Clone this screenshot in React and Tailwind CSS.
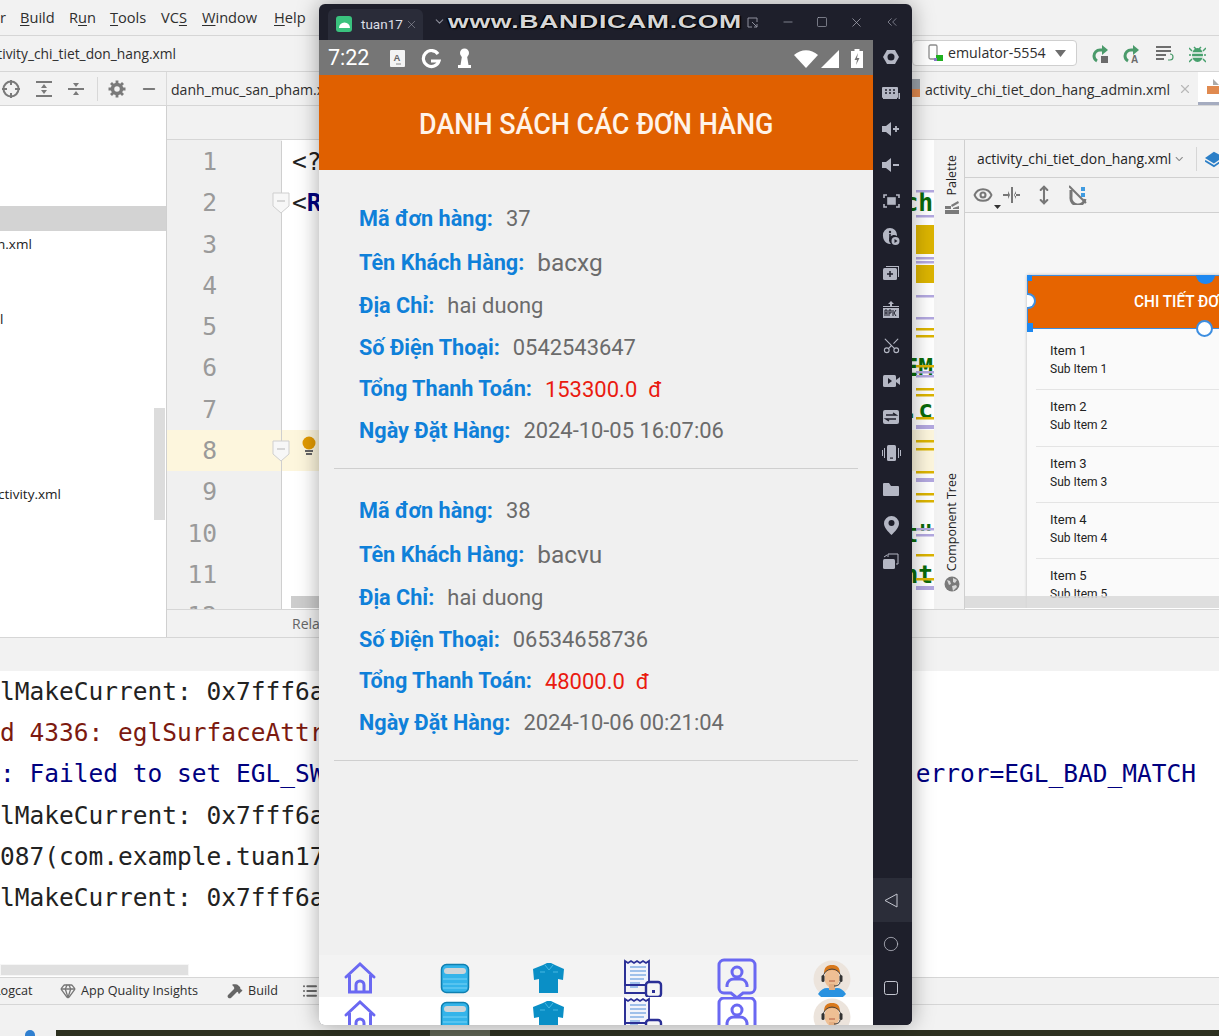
import React from "react";
import { X, Minus, Square, ChevronsLeft, ChevronDown, Scissors, Eye, MoveVertical, Hammer, Gem, List, Circle } from "lucide-react";

const IDE = "font-['Open_Sans','Noto_Sans',sans-serif]";
const MONO = "font-['DejaVu_Sans_Mono',monospace]";

function Underlined({ k, rest }) {
  return <span><span className="underline underline-offset-2 decoration-1">{k}</span>{rest}</span>;
}

function MenuBar() {
  return (
    <div className="h-[36px] shrink-0 border-b border-[#d6d6d6] flex items-center text-[14.6px] text-[#2e2e2e] whitespace-nowrap">
      <span className="w-[20px]">r</span>
      <span className="w-[49px]"><Underlined k="B" rest="uild" /></span>
      <span className="w-[41px]">R<span className="underline underline-offset-2 decoration-1">u</span>n</span>
      <span className="w-[51px]"><Underlined k="T" rest="ools" /></span>
      <span className="w-[41px]">VC<span className="underline underline-offset-2 decoration-1">S</span></span>
      <span className="w-[72px]"><Underlined k="W" rest="indow" /></span>
      <span><Underlined k="H" rest="elp" /></span>
    </div>
  );
}

function RunIcon({ letter }) {
  return (
    <svg width="18" height="20" viewBox="0 0 18 20" fill="none">
      <path d="M13 6H9a6 6 0 0 0-6 6 6 6 0 0 0 3 5" stroke="#4a9a6a" strokeWidth="3" />
      <path d="M11 1l6 5-6 5z" fill="#4a9a6a" />
      {letter ? <text x="9" y="19" fontSize="10" fontWeight="700" fill="#6b6b6b" fontFamily="Liberation Sans">A</text> : <rect x="10" y="12" width="7" height="7" fill="#6b6b6b" />}
    </svg>
  );
}

function BreadcrumbRow() {
  return (
    <div className="h-[36px] shrink-0 border-b border-[#d6d6d6] flex items-center text-[13.8px] text-[#2e2e2e] whitespace-nowrap">
      <span className="-ml-[17px] pt-[2px]">activity_chi_tiet_don_hang.xml</span>
      <div className="ml-auto flex items-center">
        <div className="w-[165px] h-[26px] mt-[-1px] bg-white border border-[#cfcfcf] rounded-[4px] flex items-center pl-[14px] pr-[10px]">
          <svg width="18" height="18" viewBox="0 0 18 18" className="mr-[3px]">
            <rect x="2" y="1" width="8" height="14" rx="1.5" fill="none" stroke="#8d8d8d" strokeWidth="1.3" />
            <rect x="9" y="11" width="7" height="6" fill="#20b020" />
            <rect x="7" y="14" width="3" height="3" fill="#8a7ac8" />
          </svg>
          <span className="text-[14.2px]">emulator-5554</span>
          <svg width="11" height="7" viewBox="0 0 11 7" className="ml-auto"><path d="M0 0h11L5.500 7z" fill="#6e6e6e" /></svg>
        </div>
        <div className="w-[142px] flex items-center pl-[14px] gap-[13px]">
          <RunIcon />
          <RunIcon letter />
          <svg width="19" height="17" viewBox="0 0 19 17" className="ml-[3px]">
            <path d="M0 2h15M0 6h15M0 10h10M0 14h8" stroke="#6e6e6e" strokeWidth="2.200" />
            <path d="M14 9c4 0 4 6 0 6h-2" stroke="#4a9a6a" fill="none" strokeWidth="1.200" />
          </svg>
          <svg width="17" height="18" viewBox="0 0 17 18" className="ml-[1px]">
            <ellipse cx="8.500" cy="10" rx="5.500" ry="7" fill="#47a06d" />
            <path d="M3 6L0 3M14 6l3-3M2 10H0M17 10h-2M3 14l-3 3M14 14l3 3M5 2l2 2M12 2l-2 2" stroke="#47a06d" strokeWidth="1.500" />
            <path d="M3 8h11M3 12h11" stroke="#f2f2f2" strokeWidth="1.300" />
          </svg>
        </div>
      </div>
    </div>
  );
}

function TabIcon() {
  return (
    <svg width="14" height="20" viewBox="0 0 14 20">
      <path d="M4 0h10v10H4z" fill="#9aa0a8" />
      <rect x="0" y="10" width="14" height="8" fill="#e08a50" />
    </svg>
  );
}

function TabsRow() {
  return (
    <div className="h-[34px] shrink-0 border-b border-[#d6d6d6] flex items-stretch text-[14.1px] text-[#2e2e2e] whitespace-nowrap">
      <div className="w-[167px] shrink-0 border-r border-[#dadada] flex items-center text-[#777]">
        <svg width="20" height="20" viewBox="0 0 20 20" fill="none" stroke="#7a7a7a" strokeWidth="2" className="ml-px">
          <circle cx="10" cy="10" r="7.500" />
          <path d="M10 1v5M10 14v5M1 10h5M14 10h5" />
        </svg>
        <svg width="18" height="18" viewBox="0 0 18 18" fill="#7a7a7a" className="ml-[14px]">
          <path d="M1 1h16v2H1zM1 15h16v2H1zM9 4l3 4H6zM9 14l-3-4h6z" />
        </svg>
        <svg width="18" height="18" viewBox="0 0 18 18" fill="#7a7a7a" className="ml-[14px]">
          <path d="M1 8h16v2H1zM9 7L6 3h6zM9 11l3 4H6z" />
        </svg>
        <div className="w-px h-[24px] bg-[#d8d8d8] ml-[12px]" />
        <svg width="18" height="18" viewBox="0 0 18 18" fill="none" stroke="#7a7a7a" className="ml-[10px]">
          <circle cx="9" cy="9" r="4.500" strokeWidth="3.500" />
          <path d="M9 0.500v3.500M9 14v3.500M0.500 9h3.500M14 9h3.500M3 3l2.500 2.500M12.500 12.500L15 15M15 3l-2.500 2.500M5.500 12.500L3 15" strokeWidth="2.800" />
        </svg>
        <Minus size={18} stroke="#7a7a7a" strokeWidth={2.500} className="ml-[14px]" />
      </div>
      <div className="pl-[4px] pt-[2px] flex items-center">danh_muc_san_pham.xml</div>
      <div className="ml-auto flex items-stretch">
        <div className="flex items-center">
          <TabIcon />
          <span className="ml-[-1px] pl-[6px] pt-[2px]">activity_chi_tiet_don_hang_admin.xml</span>
          <X size={14} stroke="#b8b8b8" className="ml-[8px] mr-[6px]" />
        </div>
        <div className="w-[21px] bg-white border-b-[3px] border-[#a5acc0] flex items-center justify-end overflow-hidden">
          <svg width="12" height="20" viewBox="0 0 12 20"><path d="M6 2l6 6H6z" fill="#aaa" /><rect y="9" width="12" height="8" fill="#e08a50" /></svg>
        </div>
      </div>
    </div>
  );
}

function LeftPanel() {
  return (
    <div className="w-[167px] shrink-0 bg-white border-r border-[#d0d0d0] relative text-[13.5px] text-[#222] whitespace-nowrap overflow-hidden">
      <div className="mt-[100px] h-[25px] bg-[#d3d3d3] w-full" />
      <div className="h-[25px] mt-px flex items-center justify-start"><span className="-ml-[3px]">n.xml</span></div>
      <div className="h-[25px] mt-[50px] flex items-center"><span>l</span></div>
      <div className="h-[25px] mt-[150px] flex items-center"><span className="-ml-[2px]">ctivity.xml</span></div>
      <div className="absolute right-0 top-[301px] w-[13px] h-[114px] bg-[#dcdcdc] border border-white" />
    </div>
  );
}

function Fold() {
  return (
    <svg width="18" height="22" viewBox="0 0 18 22" className="absolute left-[-10px] top-[10px] z-10">
      <path d="M1 1h16v13l-8 7-8-7z" fill="#f7f7f7" stroke="#cfcfcf" />
      <path d="M5 9h8" stroke="#b5b5b5" />
    </svg>
  );
}

const FRAGS = { 2: "ch", 6: "EM", 7: ".c", 10: 't"', 11: "nt" };

function Editor() {
  const lines = Array.from({ length: 12 }, (_, i) => i + 1);
  return (
    <div className="w-[767px] shrink-0 h-full overflow-hidden relative bg-white">
      <div className="h-px bg-[#f0f0f0] w-[115px]" />
      {lines.map((n) => (
        <div key={n} className={`flex h-[41.3px] ${n === 8 ? "bg-[#fdf6dd]" : ""}`}>
          <div className={`w-[115px] shrink-0 border-r border-[#cfcfcf] text-right pr-[64px] text-[24.6px] text-[#9a9a9a] leading-[41.3px] ${MONO} ${n === 8 ? "" : "bg-[#f0f0f0]"}`}>{n}</div>
          <div className={`relative flex-1 flex justify-between pl-[10px] text-[24.6px] leading-[41.3px] ${MONO} ${n === 8 ? "" : "bg-white"}`}>
            {(n === 2 || n === 8) && <Fold />}
            <span>
              {n === 1 && <span className="text-[#222]">{"<?"}</span>}
              {n === 2 && <span className="text-[#222]">{"<"}<b className="text-[#00007f]">R</b></span>}
              {n === 8 && (
                <svg width="16" height="22" viewBox="0 0 16 22" className="ml-[9px] mt-[6px]">
                  <circle cx="8" cy="7" r="6.500" fill="#e29a00" />
                  <path d="M4 15h8M5 18h6" stroke="#666" strokeWidth="2" />
                </svg>
              )}
            </span>
            <b className="text-[#0a6a0a] mr-px">{FRAGS[n]}</b>
          </div>
        </div>
      ))}
      <svg width="22" height="470" viewBox="0 0 22 470" className="absolute left-[745px] top-0">
        <g fill="#dcb400">
          <rect x="4" y="85" width="18" height="29" />
          <rect x="4" y="125" width="18" height="18" />
          <rect x="4" y="188" width="18" height="2.500" /><rect x="4" y="195" width="18" height="2.500" />
          <rect x="4" y="225" width="18" height="2.500" />
          <rect x="4" y="248" width="18" height="2.500" /><rect x="4" y="254" width="18" height="2.500" />
          <rect x="4" y="277" width="18" height="2.500" />
          <rect x="4" y="300" width="18" height="2.500" /><rect x="4" y="308" width="18" height="2.500" />
          <rect x="4" y="331" width="18" height="2.500" />
          <rect x="4" y="353" width="18" height="2.500" /><rect x="4" y="360" width="18" height="2.500" />
          <rect x="4" y="414" width="18" height="2.500" />
          <rect x="4" y="438" width="18" height="2.500" />
        </g>
        <g fill="#b3a8e0">
          <rect x="4" y="50" width="18" height="2.500" /><rect x="4" y="75" width="18" height="2.500" />
          <rect x="4" y="117" width="18" height="2.500" /><rect x="4" y="121" width="18" height="2.500" />
          <rect x="4" y="155" width="18" height="2.500" />
          <rect x="4" y="177" width="18" height="2.500" />
          <rect x="4" y="231" width="18" height="2.500" /><rect x="4" y="235" width="18" height="2.500" />
          <rect x="4" y="285" width="18" height="4" />
          <rect x="4" y="338" width="18" height="4" />
          <rect x="4" y="388" width="18" height="2.500" /><rect x="4" y="394" width="18" height="2.500" />
          <rect x="4" y="446" width="18" height="4" />
        </g>
      </svg>
      <div className="absolute left-[124px] bottom-0 w-[620px] h-[13px] bg-[#cdcdcd] border-b border-white" />
    </div>
  );
}

function PaletteStrip() {
  return (
    <div className="w-[31px] shrink-0 border-r border-[#cfcfcf] flex flex-col items-center text-[12.5px] text-[#222] pl-[6px]">
      <span className="[writing-mode:vertical-rl] rotate-180 mt-[15px] leading-none">Palette</span>
      <svg width="15" height="14" viewBox="0 0 15 14" className="mt-[5px]">
        <path d="M0 5h6v3H0zM0 9h14v4H0zM6 4l7-4 1 2-7 4zM8 7l6-2v3H8z" fill="#7a7a7a" />
      </svg>
      <span className="[writing-mode:vertical-rl] rotate-180 mt-auto leading-none whitespace-nowrap">Component Tree</span>
      <svg width="16" height="16" viewBox="0 0 16 16" className="mt-[5px] mb-[17px]">
        <circle cx="8" cy="8" r="7.500" fill="#7a7a7a" />
        <path d="M3 4l3 1 1 3-2 1zM9 2l4 2-2 3-2-1zM8 10l4-1 1 2-4 4z" fill="#d8d8d8" />
      </svg>
    </div>
  );
}

function PreviewItem({ n }) {
  return (
    <div className="h-[56.3px] ml-[9px] border-b-[1px] border-[#e4e4e4] pl-[14px] pt-[8px] font-['Roboto',sans-serif] text-[#222] overflow-hidden">
      <div className="text-[13px] leading-[18px]">Item {n}</div>
      <div className="text-[12px] leading-[18px]">Sub Item {n}</div>
    </div>
  );
}

function DesignPanel() {
  return (
    <div className="flex-1 flex flex-col min-w-0 overflow-hidden">
      <div className="h-[38px] shrink-0 border-b border-[#d0d0d0] flex items-center pl-[12px] text-[13.9px] text-[#222] whitespace-nowrap">
        <span className="pt-px">activity_chi_tiet_don_hang.xml</span>
        <ChevronDown size={14} stroke="#888" className="ml-[2px]" />
        <div className="w-px h-[24px] bg-[#d6d6d6] ml-[10px]" />
        <svg width="16" height="20" viewBox="0 0 16 20" className="ml-[8px]"><path d="M10 2L0 9l10 6 6-4V5z" fill="#2c7fc7" /><path d="M0 12l10 6 6-4" stroke="#2c7fc7" strokeWidth="2" fill="none" /></svg>
      </div>
      <div className="h-[35px] shrink-0 border-b border-[#d0d0d0] flex items-center pl-[8px] text-[#777] gap-[8px]">
        <div className="relative w-[22px]">
          <Eye size={20} stroke="#777" strokeWidth={2.500} />
          <svg width="7" height="4" viewBox="0 0 7 4" className="absolute right-[-6px] bottom-[-4px]"><path d="M0 0h7L3.500 4z" fill="#333" /></svg>
        </div>
        <svg width="18" height="18" viewBox="0 0 18 18" fill="#777"><path d="M8 1h2v16H8zM12 8h5v2h-5zM0 8h5v2H0zM5 5l2 4-2 4zM13 5l-2 4 2 4z" /></svg>
        <MoveVertical size={20} stroke="#777" strokeWidth={2.500} className="ml-[5px]" />
        <svg width="18" height="20" viewBox="0 0 18 20" className="ml-[7px]">
          <path d="M2 5v7a7 7 0 0 0 14 2" fill="none" stroke="#777" strokeWidth="3" />
          <path d="M0 1l17 17" stroke="#777" strokeWidth="2" />
          <rect x="12" y="2" width="4" height="4" fill="#3f9be0" />
          <rect x="12" y="8" width="4" height="4" fill="#3f9be0" />
        </svg>
      </div>
      <div className="flex-1 relative bg-[#f6f6f6] overflow-hidden">
        <div className="mt-[62px] ml-[62px] bg-[#fafafa] h-[400px] w-[300px] shadow-[0_0_3px_rgba(0,0,0,.25)]">
          <div className="relative h-[54px] bg-[#e66400] border border-[#3d8ee0] flex items-center pl-[106px]">
            <span className="text-white font-medium text-[16.5px] whitespace-nowrap scale-x-[0.93] origin-left font-['Roboto',sans-serif]">CHI TIẾT ĐƠN HÀNG</span>
            <span className="absolute left-[-1px] top-[-1px] w-[5px] h-[6px] bg-[#1e88f0]" />
            <span className="absolute left-[-1px] bottom-[-4px] w-[6px] h-[9px] bg-[#1e88f0]" />
            <span className="absolute left-[-1px] top-[17px] w-[9px] h-[16px] rounded-r-full bg-white border-2 border-l-0 border-[#3d8ee0]" />
            <span className="absolute left-[168px] top-[-1px] w-[19px] h-[9px] rounded-b-full bg-[#1e88f0]" />
            <span className="absolute left-[168px] bottom-[-9px] w-[17px] h-[17px] rounded-full bg-white border-2 border-[#3d8ee0]" />
          </div>
          <div className="h-[5px]" />
          {[1, 2, 3, 4, 5].map((n) => <PreviewItem key={n} n={n} />)}
        </div>
        <div className="absolute left-0 right-0 bottom-0 h-[13px] bg-[#d8d8d8]/85 border-b border-white" />
      </div>
    </div>
  );
}

function MainArea() {
  return (
    <div className="h-[532px] shrink-0 flex border-b border-[#d6d6d6]">
      <LeftPanel />
      <div className="flex-1 flex flex-col min-w-0">
        <div className="h-[34px] shrink-0 border-b border-[#d6d6d6]" />
        <div className="h-[470px] shrink-0 flex border-b border-[#d6d6d6]">
          <Editor />
          <PaletteStrip />
          <DesignPanel />
        </div>
        <div className="flex-1 flex items-center pl-[125px] text-[14px] text-[#666]">RelativeLayout</div>
      </div>
    </div>
  );
}

function Console() {
  const line = `h-[41.2px] leading-[41.2px] whitespace-nowrap overflow-hidden flex justify-between`;
  return (
    <div className="h-[339px] shrink-0 flex flex-col">
      <div className="h-[33px] shrink-0" />
      <div className={`flex-1 bg-white flex flex-col text-[24.5px] ${MONO}`}>
        <div className={`${line} text-[#222]`}>lMakeCurrent: 0x7fff6a</div>
        <div className={`${line} text-[#7c1a10]`}>d 4336: eglSurfaceAttr</div>
        <div className={`${line} text-[#00007f] pr-[23px]`}><span>: Failed to set EGL_SW</span><span>error=EGL_BAD_MATCH</span></div>
        <div className={`${line} text-[#222]`}>lMakeCurrent: 0x7fff6a</div>
        <div className={`${line} text-[#222]`}>087(com.example.tuan17</div>
        <div className={`${line} text-[#222]`}>lMakeCurrent: 0x7fff6a</div>
        <div className="mt-auto mb-px w-[189px] h-[12px] bg-[#e0e0e0] border border-[#f6f6f6]" />
      </div>
    </div>
  );
}

function BottomBars() {
  return (
    <>
      <div className="h-[28px] shrink-0 border-y border-[#d6d6d6] flex items-center text-[12.6px] text-[#2e2e2e] whitespace-nowrap">
        <span className="-ml-[6px] w-[66px]">Logcat</span>
        <Gem size={16} stroke="#777" />
        <span className="ml-[5px]">App Quality Insights</span>
        <Hammer size={16} stroke="#666" fill="#666" className="ml-[29px]" />
        <span className="ml-[5px]">Build</span>
        <List size={16} stroke="#666" strokeWidth={3} className="ml-[24px]" />
      </div>
      <div className="h-[25px] shrink-0" />
      <div className="h-[6px] shrink-0 bg-[#2d3120] flex">
        <div className="w-[56px] bg-[#f0f0f0] flex justify-center"><span className="w-[10px] h-[6px] rounded-t-full bg-[#2f7fd0] ml-[4px]" /></div>
        <div className="ml-[374px] w-[60px] bg-[#5e6352]" />
      </div>
    </>
  );
}

function SideIcon({ children, h = "h-[36px]", active }) {
  return <div className={`${h} shrink-0 flex items-center justify-center pr-[3px] ${active ? "bg-[#2b2d39]" : ""}`}>{children}</div>;
}

const F = "#b4b7c4";

function Sidebar() {
  return (
    <div className="w-[39px] shrink-0 flex flex-col bg-[#1e1f2b] -mt-px">
      <SideIcon><svg width="18" height="18" viewBox="0 0 18 18"><path d="M5 2h8l4 7-4 7H5L1 9z" fill={F} /><circle cx="9" cy="9" r="3.500" fill="#1e1f2b" /></svg></SideIcon>
      <SideIcon><svg width="18" height="14" viewBox="0 0 18 14"><rect width="16" height="11" y="1" rx="1" fill={F} /><path d="M3 4h2M7 4h2M11 4h2M3 7h2M7 7h2M11 7h2" stroke="#1e1f2b" strokeWidth="1.500" /><rect x="1" y="12" width="14" height="1" fill={F} /><rect x="16.500" y="7" width="1.500" height="6" fill={F} /></svg></SideIcon>
      <SideIcon><svg width="18" height="14" viewBox="0 0 18 14"><path d="M0 4h4l5-4v14L4 10H0z" fill={F} /><path d="M11 7h6M14 4v6" stroke={F} strokeWidth="1.800" /></svg></SideIcon>
      <SideIcon><svg width="18" height="14" viewBox="0 0 18 14"><path d="M0 4h4l5-4v14L4 10H0z" fill={F} /><path d="M11 7h6" stroke={F} strokeWidth="1.800" /></svg></SideIcon>
      <SideIcon><svg width="17" height="14" viewBox="0 0 17 14" fill="none" stroke={F} strokeWidth="1.600"><path d="M1 4V1h3M13 1h3v3M16 10v3h-3M4 13H1v-3" /><rect x="5" y="4" width="7" height="6" fill={F} /></svg></SideIcon>
      <SideIcon><svg width="18" height="18" viewBox="0 0 18 18"><path d="M8 0a7 7 0 0 1 7 7v1a5 5 0 0 0-6 8H8C4 16 1 12 1 8a7 7 0 0 1 7-8z" fill={F} /><circle cx="8" cy="4" r="1.200" fill="#1e1f2b" /><rect x="7.200" y="6" width="1.600" height="5" fill="#1e1f2b" /><circle cx="13.500" cy="13" r="4" fill={F} /><path d="M12.500 11v4l3-2z" fill="#1e1f2b" /></svg></SideIcon>
      <SideIcon><svg width="16" height="14" viewBox="0 0 16 14"><path d="M3 0h13v11h-1V1H3z" fill={F} /><rect y="2" width="14" height="12" rx="1.500" fill={F} /><path d="M7 5v6M4 8h6" stroke="#1e1f2b" strokeWidth="1.500" /></svg></SideIcon>
      <SideIcon><svg width="16" height="17" viewBox="0 0 16 17"><path d="M8 0l3 3H9v2H7V3H5zM0 5h16v1H0z" fill={F} /><rect y="7" width="16" height="10" fill={F} /><path d="M2 15v-6h2v6M2 12h2M6 15V9h2v3H6M10 9v6M13 9l-2 3 2 3" stroke="#1e1f2b" fill="none" /></svg></SideIcon>
      <SideIcon><Scissors size={19} stroke={F} strokeWidth={1.400} className="-rotate-90" /></SideIcon>
      <SideIcon><svg width="17" height="12" viewBox="0 0 17 12"><rect width="13" height="12" rx="1.500" fill={F} /><path d="M13 5l4-3v8l-4-3z" fill={F} /><path d="M5 3l4 3-4 3z" fill="#1e1f2b" /></svg></SideIcon>
      <SideIcon><svg width="16" height="14" viewBox="0 0 16 14"><rect width="16" height="14" rx="2" fill={F} /><path d="M3 5h10L10 3M13 9H3l3 2" stroke="#1e1f2b" fill="none" strokeWidth="1.400" /></svg></SideIcon>
      <SideIcon><svg width="19" height="16" viewBox="0 0 19 16"><rect x="5" y="0" width="9" height="16" rx="1.500" fill={F} /><rect x="8" y="12.500" width="3" height="1.200" fill="#1e1f2b" /><path d="M2.500 3v10M0.500 5v6M16.500 3v10M18.500 5v6" stroke={F} /></svg></SideIcon>
      <SideIcon><svg width="16" height="13" viewBox="0 0 16 13"><path d="M0 1a1 1 0 0 1 1-1h5l2 3h7a1 1 0 0 1 1 1v8a1 1 0 0 1-1 1H1a1 1 0 0 1-1-1z" fill={F} /></svg></SideIcon>
      <SideIcon><svg width="15" height="19" viewBox="0 0 15 19"><path d="M7.500 0A7.500 7.500 0 0 1 15 7.500c0 4-4 8-7.500 11.500C4 15.500 0 11.500 0 7.500A7.500 7.500 0 0 1 7.500 0z" fill={F} /><circle cx="7.500" cy="7" r="3" fill="#1e1f2b" /></svg></SideIcon>
      <SideIcon><svg width="16" height="16" viewBox="0 0 16 16"><rect y="6" width="12" height="10" rx="1.500" fill={F} /><path d="M5 1h10v10h-2M5 1v3" stroke={F} fill="none" /><path d="M1 4l3-2" stroke={F} /></svg></SideIcon>
      <div className="flex-1" />
      <SideIcon h="h-[44px]" active><svg width="14" height="15" viewBox="0 0 14 15"><path d="M13 1v13L1 7.500z" fill="none" stroke="#c4c6d0" /></svg></SideIcon>
      <SideIcon h="h-[44px]"><Circle size={16} stroke="#c4c6d0" strokeWidth={1.100} /></SideIcon>
      <SideIcon h="h-[44px]"><svg width="14" height="14" viewBox="0 0 14 14"><rect x="0.500" y="0.500" width="13" height="13" rx="2" fill="none" stroke="#c4c6d0" /></svg></SideIcon>
      <div className="h-[15px]" />
    </div>
  );
}

function TitleBar() {
  return (
    <div className="h-[36px] shrink-0 flex items-end relative font-['Roboto',sans-serif]">
      <div className="ml-[9px] w-[95px] h-[31px] bg-[#2a2c39] rounded-t-[6px] flex items-center pl-[8px] pb-[1px]">
        <div className="w-[16px] h-[16px] rounded-[3px] bg-[#3ac27e] flex items-center justify-center">
          <svg width="11" height="7" viewBox="0 0 11 7"><path d="M0 7a5.500 5.500 0 0 1 11 0z" fill="#fff" /></svg>
        </div>
        <span className="ml-[9px] text-[13.5px] text-[#dcdee6]">tuan17</span>
        <X size={13} stroke="#a5a7b2" strokeWidth={1} className="ml-[2px]" />
      </div>
      <ChevronDown size={13} stroke="#8c8e9a" className="ml-[10px] mb-[12px]" />
      <div className="ml-[2px] mb-[6px] w-[211px] text-[#d6d6d6] font-bold text-[19px] leading-[24px] whitespace-nowrap font-['Liberation_Sans',sans-serif] [text-shadow:1px_1px_1px_#000,-1px_0_1px_#000] tracking-[0.5px] scale-x-[1.4] origin-left">www.BANDICAM.COM</div>
      <div className="ml-auto flex items-center text-[#a8aab6] h-[36px]">
        <svg width="11" height="11" viewBox="0 0 11 11" fill="none" stroke="#8f919e"><path d="M10 5V1H1v9h4M5 5l5 5M10 7v3H7" /></svg>
        <Minus size={14} stroke="#a8aab6" strokeWidth={1.200} className="ml-[23px]" />
        <Square size={12} stroke="#a8aab6" strokeWidth={1.300} className="ml-[21px]" />
        <X size={15} stroke="#a8aab6" strokeWidth={1.200} className="ml-[21px]" />
        <ChevronsLeft size={16} stroke="#8f919e" strokeWidth={1.200} className="ml-[20px] mr-[12px]" />
      </div>
    </div>
  );
}

function StatusBar() {
  return (
    <div className="h-[35px] shrink-0 bg-[#767676] flex items-center text-white pl-[9px] pr-[10px] pt-[2px] font-['Roboto',sans-serif]">
      <span className="text-[21.5px]">7:22</span>
      <svg width="15" height="17" viewBox="0 0 15 17" className="ml-[21px]"><rect width="15" height="17" rx="1" fill="#f3f3f3" /><text x="3.500" y="11" fontSize="9.500" fontWeight="700" fill="#666" fontFamily="Liberation Sans">A</text><path d="M6 14h5" stroke="#888" /></svg>
      <svg width="20" height="20" viewBox="0 0 20 20" className="ml-[16px]"><path d="M17 5A8 8 0 1 0 18 12H10" fill="none" stroke="#fff" strokeWidth="3.200" /></svg>
      <svg width="13" height="21" viewBox="0 0 13 21" className="ml-[17px]"><circle cx="6.500" cy="5" r="4.500" fill="#fff" /><path d="M4 8h5l1.500 9H13v3H0v-3h2.500z" fill="#fff" /></svg>
      <div className="ml-auto flex items-center">
        <svg width="24" height="18" viewBox="0 0 24 18"><path d="M12 18L0 5c7-6.500 17-6.500 24 0z" fill="#fff" /></svg>
        <svg width="18" height="18" viewBox="0 0 18 18" className="ml-[3px]"><path d="M18 0v18H0z" fill="#fff" /></svg>
        <svg width="12" height="19" viewBox="0 0 12 19" className="ml-[12px]"><path d="M3.500 0h5v2H12v17H0V2h3.500z" fill="#fff" /><path d="M7 4L3.500 11H6l-1 5 3.500-7H6z" fill="#767676" /></svg>
      </div>
    </div>
  );
}

function Field({ label, value, cls = "", valueCls = "text-[#6b6b6b] text-[21.9px]" }) {
  return (
    <div className={`h-[42px] flex items-center whitespace-pre ${cls}`}>
      <span className="font-bold text-[21.65px] text-[#0f80d9]">{label}</span>
      <span className={`ml-[13px] ${valueCls}`}>{value}</span>
    </div>
  );
}

function OrderCard({ id, name, addr, phone, total, date }) {
  return (
    <div className="mx-[15px] pt-[21px] pb-[16px] pl-[25px] border-b border-[#cfcfcf] h-[292px]">
      <Field label="Mã đơn hàng:" value={id} />
      <Field label="Tên Khách Hàng:" value={name} cls="mt-[2px]" valueCls="text-[#6b6b6b] text-[24.4px]" />
      <Field label="Địa Chỉ:" value={addr} cls="mt-px" />
      <Field label="Số Điện Thoại:" value={phone} />
      <Field label="Tổng Thanh Toán:" value={total} cls="-mt-px" valueCls="text-[#ea1b10] text-[22px]" />
      <Field label="Ngày Đặt Hàng:" value={date} />
    </div>
  );
}

function HomeIcon() {
  return (
    <svg width="40" height="40" viewBox="0 0 40 40" fill="none" stroke="#6a68f2" strokeWidth="3">
      <path d="M6 19L20 6l14 13" strokeLinecap="round" />
      <path d="M9.500 17v17h21V17" />
      <path d="M16 34v-7a4 4 0 0 1 8 0v7" />
    </svg>
  );
}
function BoxIcon() {
  return (
    <svg width="40" height="40" viewBox="0 0 40 40">
      <rect x="6.500" y="6.500" width="27" height="28" rx="5" fill="#33b4ea" stroke="#0f7fb0" strokeWidth="1.500" />
      <rect x="9" y="10" width="22" height="6" rx="3" fill="#cfd5d8" />
      <path d="M8 21h24M8 26h24M8 30h24" stroke="#7ad3f5" />
    </svg>
  );
}
function ShirtIcon() {
  return (
    <svg width="40" height="40" viewBox="0 0 40 40">
      <path d="M14 7l4-2h4l4 2 9 4-1 11-5-1v14H10V21l-5 1-1-11z" fill="#0a8fc6" />
      <path d="M16 7l4 5 4-5" stroke="#46b8e2" fill="none" />
      <path d="M11 14h5M24 14h5" stroke="#46b8e2" />
    </svg>
  );
}
function ReceiptIcon() {
  return (
    <svg width="40" height="40" viewBox="0 0 40 40" fill="none">
      <path d="M2 3l3 2 3-2 3 2 3-2 3 2 3-2 3 2 3-2v24H2z" fill="#f2f4fb" stroke="#2a2f96" strokeWidth="1.800" />
      <path d="M2 3v32h20" stroke="#2a2f96" strokeWidth="1.800" />
      <path d="M7 9h16M7 13h16M7 17h16M7 21h14M7 25h10M7 29h8" stroke="#9fc0ea" strokeWidth="2" />
      <rect x="23" y="24" width="15" height="15" rx="3" fill="#f6f6f6" stroke="#2a2f96" strokeWidth="2.400" />
      <rect x="29" y="32" width="3" height="3" fill="#2a2f96" />
    </svg>
  );
}
function ContactIcon() {
  return (
    <svg width="40" height="42" viewBox="0 0 40 42" fill="none" stroke="#6a68f2" strokeWidth="3">
      <path d="M7 2h26a5 5 0 0 1 5 5v23a5 5 0 0 1-5 5h-7l-6 5-6-5H7a5 5 0 0 1-5-5V7a5 5 0 0 1 5-5z" />
      <circle cx="20" cy="14" r="5" />
      <path d="M10 29v-2a7 7 0 0 1 7-6h6a7 7 0 0 1 7 6v2" />
    </svg>
  );
}
function AvatarIcon() {
  return (
    <svg width="40" height="40" viewBox="0 0 40 40">
      <circle cx="20" cy="21" r="18.500" fill="#ece4dc" />
      <path d="M6 36c4-6 8-7 14-5 6-2 10-1 14 5a18 18 0 0 1-28 0z" fill="#2a92e0" />
      <ellipse cx="20" cy="20" rx="7.500" ry="10" fill="#eebf94" />
      <rect x="17" y="26" width="6" height="6" fill="#e3ae82" />
      <path d="M12 16c0-7 3-9 8-9s8 2 8 9c-2-3-4-4-8-4s-6 1-8 4z" fill="#d9791c" />
      <path d="M11 20a9 9 0 0 1 18 0" stroke="#444" fill="none" />
      <rect x="9.500" y="17" width="3" height="7" rx="1.500" fill="#333" />
      <rect x="27.500" y="17" width="3" height="7" rx="1.500" fill="#333" />
      <path d="M28 24c0 3-3 4-6 4" stroke="#333" fill="none" />
      <path d="M17 23h6" stroke="#b4583c" />
    </svg>
  );
}

function NavRow({ cls, inner }) {
  return (
    <div className={`overflow-hidden ${cls}`}>
      <div className={`-ml-[6px] grid grid-cols-[repeat(6,94.400px)] justify-items-center ${inner}`}>
        <HomeIcon /><BoxIcon /><ShirtIcon />
        <div className="-ml-[1px]"><ReceiptIcon /></div>
        <div className="-ml-[1px]"><ContactIcon /></div>
        <AvatarIcon />
      </div>
    </div>
  );
}

function Emulator() {
  return (
    <div className="absolute left-[319px] top-[4px] w-[593px] h-[1021px] bg-[#1e1f2b] rounded-[6px] shadow-[0_0_22px_rgba(0,0,0,.35)] overflow-hidden flex flex-col">
      <TitleBar />
      <div className="flex-1 flex min-h-0">
        <div className="w-[554px] shrink-0 flex flex-col bg-[#f0f0f0] font-['Roboto',sans-serif]">
          <StatusBar />
          <div className="h-[95px] shrink-0 bg-[#e06000] flex items-center justify-center pt-[2px]">
            <span className="text-[#fff3e8] font-medium text-[30px] whitespace-nowrap scale-x-[0.898]">DANH SÁCH CÁC ĐƠN HÀNG</span>
          </div>
          <div className="pt-[7px] flex-1">
            <OrderCard id="37" name="bacxg" addr="hai duong" phone="0542543647" total="153300.0  đ" date="2024-10-05 16:07:06" />
            <OrderCard id="38" name="bacvu" addr="hai duong" phone="06534658736" total="48000.0  đ" date="2024-10-06 00:21:04" />
          </div>
          <NavRow cls="h-[42px] shrink-0 bg-[#f3f3f3]" inner="pt-[3px]" />
          <NavRow cls="h-[28px] shrink-0 bg-white" inner="-mt-px" />
        </div>
        <Sidebar />
      </div>
    </div>
  );
}

export default function App() {
  return (
    <div className={`relative w-[1219px] h-[1036px] overflow-hidden bg-[#f2f2f2] flex flex-col ${IDE}`}>
      <MenuBar />
      <BreadcrumbRow />
      <TabsRow />
      <MainArea />
      <Console />
      <BottomBars />
      <Emulator />
    </div>
  );
}
